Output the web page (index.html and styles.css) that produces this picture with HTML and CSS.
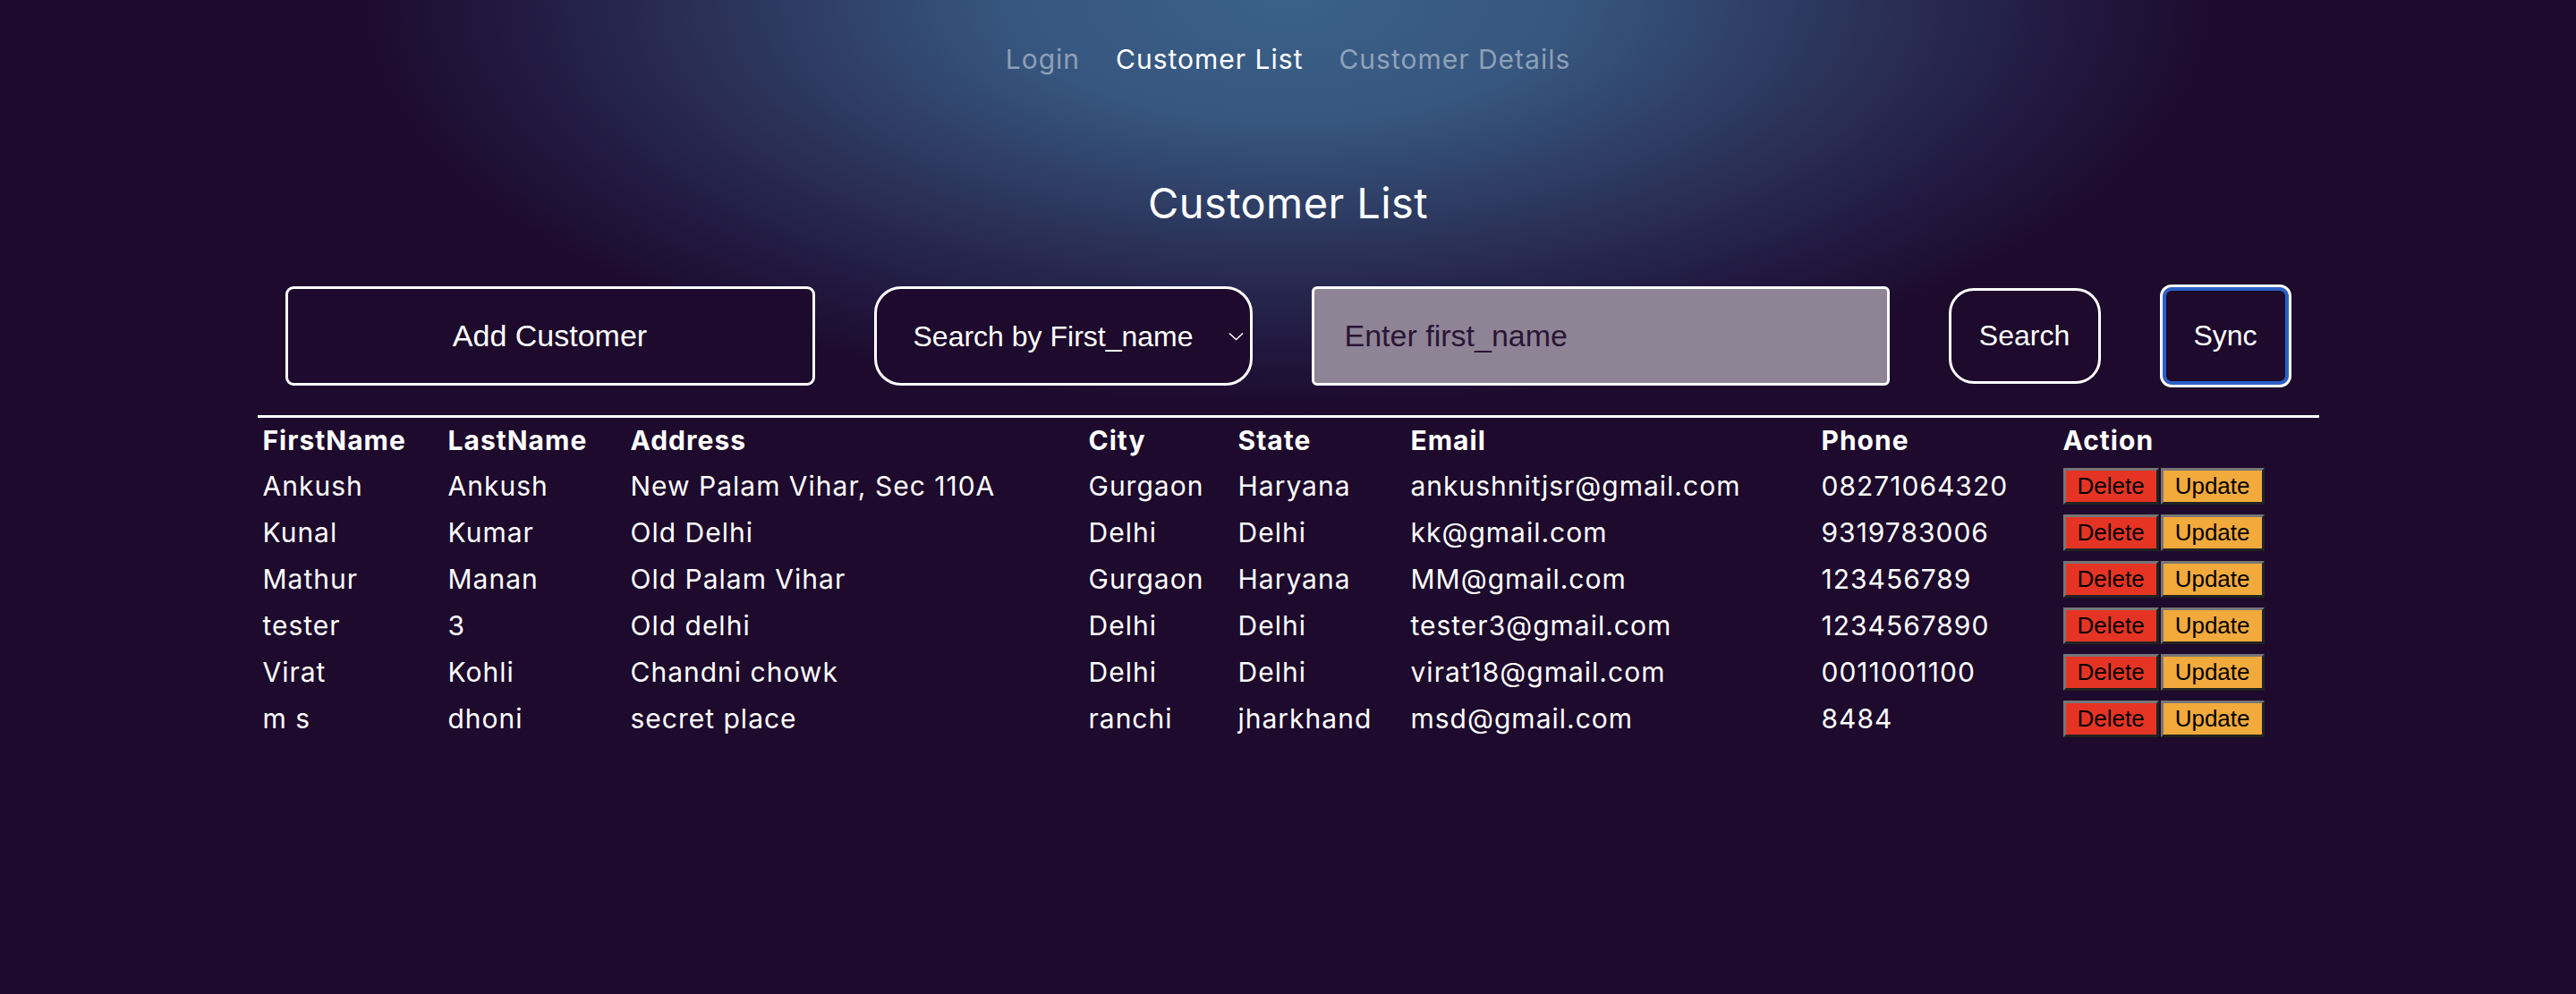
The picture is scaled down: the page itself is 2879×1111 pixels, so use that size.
FILE: index.html
```html
<!DOCTYPE html>
<html lang="en">
<head>
<meta charset="utf-8">
<title>Customer List</title>
<link rel="stylesheet" href="styles.css">
</head>
<body>
<div class="page">
  <nav class="nav">
    <a class="nav-link" href="#">Login</a>
    <a class="nav-link active" href="#">Customer List</a>
    <a class="nav-link" href="#">Customer Details</a>
  </nav>
  <h1 class="title">Customer List</h1>
  <div class="toolbar">
    <button class="btn btn-add">Add Customer</button>
    <div class="select-wrap">
      <select class="select">
        <option>Search by First_name</option>
      </select>
      <svg class="chevron" width="17" height="10" viewBox="0 0 17 10"><path d="M1 1.5 L8.5 8.5 L16 1.5" fill="none" stroke="#fff" stroke-width="1.6"/></svg>
    </div>
    <input class="search-input" type="text" placeholder="Enter first_name">
    <button class="btn btn-search">Search</button>
    <button class="btn btn-sync">Sync</button>
  </div>
  <div class="table-wrap">
    <table class="table">
      <colgroup>
        <col class="c1"><col class="c2"><col class="c3"><col class="c4"><col class="c5"><col class="c6"><col class="c7"><col class="c8">
      </colgroup>
      <thead>
        <tr><th>FirstName</th><th>LastName</th><th>Address</th><th>City</th><th>State</th><th>Email</th><th>Phone</th><th>Action</th></tr>
      </thead>
      <tbody>
        <tr><td>Ankush</td><td>Ankush</td><td>New Palam Vihar, Sec 110A</td><td>Gurgaon</td><td>Haryana</td><td>ankushnitjsr@gmail.com</td><td>08271064320</td><td><div class="actions"><button class="act del">Delete</button><button class="act upd">Update</button></div></td></tr>
        <tr><td>Kunal</td><td>Kumar</td><td>Old Delhi</td><td>Delhi</td><td>Delhi</td><td>kk@gmail.com</td><td>9319783006</td><td><div class="actions"><button class="act del">Delete</button><button class="act upd">Update</button></div></td></tr>
        <tr><td>Mathur</td><td>Manan</td><td>Old Palam Vihar</td><td>Gurgaon</td><td>Haryana</td><td>MM@gmail.com</td><td>123456789</td><td><div class="actions"><button class="act del">Delete</button><button class="act upd">Update</button></div></td></tr>
        <tr><td>tester</td><td>3</td><td>Old delhi</td><td>Delhi</td><td>Delhi</td><td>tester3@gmail.com</td><td>1234567890</td><td><div class="actions"><button class="act del">Delete</button><button class="act upd">Update</button></div></td></tr>
        <tr><td>Virat</td><td>Kohli</td><td>Chandni chowk</td><td>Delhi</td><td>Delhi</td><td>virat18@gmail.com</td><td>0011001100</td><td><div class="actions"><button class="act del">Delete</button><button class="act upd">Update</button></div></td></tr>
        <tr><td>m s</td><td>dhoni</td><td>secret place</td><td>ranchi</td><td>jharkhand</td><td>msd@gmail.com</td><td>8484</td><td><div class="actions"><button class="act del">Delete</button><button class="act upd">Update</button></div></td></tr>
      </tbody>
    </table>
  </div>
</div>
</body>
</html>
```
FILE: styles.css
```css
html, body {
  margin: 0;
  padding: 0;
}
body {
  min-height: 1111px;
  background-color: #1d0a2c;
  background-image: radial-gradient(ellipse 1050px 460px at 50% 0%, #3b6189 0%, #36567f 30%, #2b3359 60%, #221a42 82%, #1d0a2c 100%);
  background-repeat: no-repeat;
  font-family: Inter, "Liberation Sans", sans-serif;
  color: #ffffff;
}
.page {
  display: flex;
  flex-direction: column;
  align-items: center;
}
.nav {
  display: flex;
  justify-content: center;
  gap: 40px;
  padding-top: 48px;
  font-size: 30px;
  line-height: 36px;
  letter-spacing: 1px;
}
.nav-link {
  color: rgba(255, 255, 255, 0.45);
  text-decoration: none;
}
.nav-link.active {
  color: #ffffff;
}
.title {
  margin: 115px 0 0;
  font-size: 47px;
  line-height: 56px;
  font-weight: 400;
  letter-spacing: 0.4px;
}
.toolbar {
  margin-top: 63px;
  display: flex;
  align-items: center;
  justify-content: center;
  gap: 66px;
}
.btn {
  box-sizing: border-box;
  background: #1d0a2c;
  color: #fff;
  border: 3px solid #fff;
  font-family: "Liberation Sans", Arial, sans-serif;
  font-size: 32px;
  padding: 0;
}
.btn-add {
  width: 592px;
  height: 111px;
  border-radius: 9px;
  font-size: 34px;
}
.select-wrap {
  position: relative;
  width: 423px;
  height: 111px;
}
.select {
  box-sizing: border-box;
  width: 100%;
  height: 100%;
  appearance: none;
  -webkit-appearance: none;
  background: #1d0a2c;
  color: #fff;
  border: 3px solid #fff;
  border-radius: 30px;
  padding: 0 0 0 41px;
  font-family: "Liberation Sans", Arial, sans-serif;
  font-size: 32px;
  outline: none;
}
.chevron {
  position: absolute;
  right: 10px;
  top: 51px;
}
.search-input {
  box-sizing: border-box;
  width: 646px;
  height: 111px;
  background: #8f8496;
  border: 3px solid #fff;
  border-radius: 6px;
  padding: 0 0 0 34px;
  font-family: "Liberation Sans", Arial, sans-serif;
  font-size: 34px;
  color: #2a1535;
  outline: none;
}
.search-input::placeholder {
  color: #2a1535;
  opacity: 1;
}
.btn-search {
  width: 170px;
  height: 107px;
  border-radius: 28px;
}
.btn-sync {
  width: 147px;
  height: 115px;
  border-radius: 13px;
  box-shadow: inset 0 0 0 4px #2b60c6;
}
.table-wrap {
  margin-top: 31px;
  width: 2304px;
  border-top: 3px solid #fff;
}
.table {
  width: 2304px;
  table-layout: fixed;
  border-collapse: collapse;
  border-spacing: 0;
  font-size: 30px;
  letter-spacing: 1px;
}
.c1 { width: 207px; }
.c2 { width: 204px; }
.c3 { width: 512px; }
.c4 { width: 167px; }
.c5 { width: 193px; }
.c6 { width: 459px; }
.c7 { width: 270px; }
.c8 { width: 292px; }
.table th,
.table td {
  height: 52px;
  padding: 0 0 0 6px;
  text-align: left;
  vertical-align: middle;
  white-space: nowrap;
}
.table th {
  height: 50px;
  font-weight: 700;
}
.table td {
  font-weight: 400;
}
.actions {
  display: flex;
  gap: 2px;
  letter-spacing: 0;
}
.act {
  box-sizing: border-box;
  height: 41px;
  padding: 0 13px;
  border: 3px solid;
  border-color: #767676 #222 #222 #767676;
  font-family: "Liberation Sans", Arial, sans-serif;
  font-size: 26px;
  letter-spacing: 0;
  color: #000;
}
.del {
  background: #e63424;
}
.upd {
  background: #f2aa3c;
}
```
